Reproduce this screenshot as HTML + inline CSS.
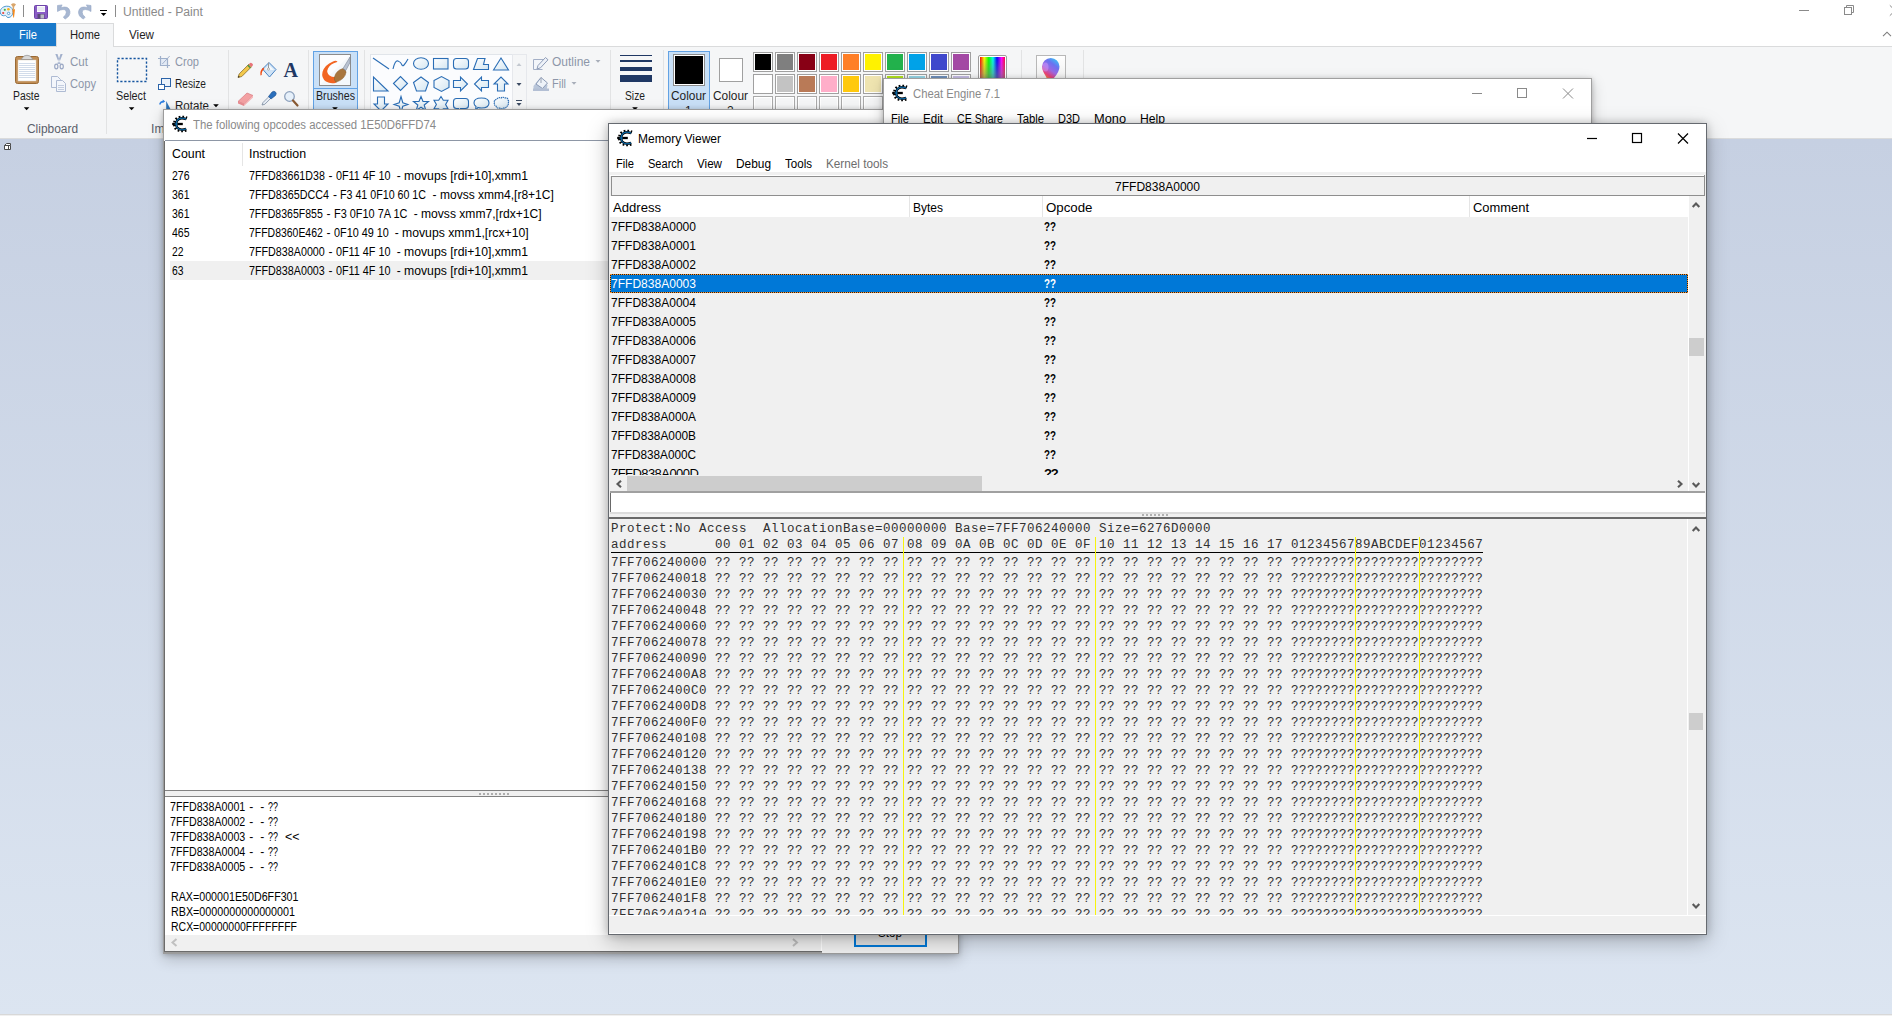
<!DOCTYPE html>
<html><head><meta charset="utf-8"><title>Untitled - Paint</title>
<style>
html,body{margin:0;padding:0}
body{width:1892px;height:1016px;overflow:hidden;position:relative;background:#fff;font-family:"Liberation Sans",sans-serif;font-size:12px}
.t{position:absolute;white-space:pre;line-height:normal}
.r{position:absolute}
.m{position:absolute;white-space:pre;font-family:"Liberation Mono",monospace;font-size:12.5px;letter-spacing:0.5px;line-height:16px;color:#303030;margin:0}
svg{position:absolute;overflow:visible}
</style></head><body>
<div class="r" style="left:0px;top:139px;width:1892px;height:877px;background:linear-gradient(#c6d0e2,#dce5f1);"></div>
<div class="r" style="left:0px;top:1014px;width:1892px;height:2px;background:#f0f0f0;border-top:1px solid #d8d8d8;box-sizing:border-box;"></div>
<svg style="left:3px;top:142px" width="10" height="10" viewBox="3 142 10 10"><path d="M4.500 145.500h6v4h-6zM4.500 145.500l2-2h4v2M8.500 145.500v4" fill="#fff" stroke="#4a4a4a" stroke-width="1"/></svg>
<div class="r" style="left:0px;top:0px;width:1892px;height:23px;background:#fff;"></div>
<div class="r" style="left:0px;top:23px;width:1892px;height:24px;background:#fff;border-bottom:1px solid #dadbdc;box-sizing:border-box;"></div>
<div class="r" style="left:0px;top:47px;width:1892px;height:92px;background:#f5f6f7;border-bottom:1px solid #dadbdc;box-sizing:border-box;"></div>
<div class="r" style="left:0px;top:23px;width:56px;height:23px;background:#1979ca;"></div>
<span class="t" style="left:19.00px;top:28.14px;font-size:12px;color:#fff;transform:scaleX(0.9310);transform-origin:0 0;">File</span>
<div class="r" style="left:56px;top:23px;width:58px;height:24px;background:#f5f6f7;border:1px solid #dadbdc;border-bottom:none;box-sizing:border-box;"></div>
<span class="t" style="left:70.00px;top:28.14px;font-size:12px;color:#1e1e1e;transform:scaleX(0.9372);transform-origin:0 0;">Home</span>
<span class="t" style="left:129.00px;top:28.14px;font-size:12px;color:#1e1e1e;transform:scaleX(0.9693);transform-origin:0 0;">View</span>
<span class="t" style="left:123.00px;top:5.14px;font-size:12px;color:#8a8a8a;transform:scaleX(1.0165);transform-origin:0 0;">Untitled - Paint</span>
<span class="t" style="left:13.00px;top:89.14px;font-size:12px;color:#1e1e1e;transform:scaleX(0.8636);transform-origin:0 0;">Paste</span>
<span class="t" style="left:70.00px;top:55.14px;font-size:12px;color:#8d96a9;transform:scaleX(0.9639);transform-origin:0 0;">Cut</span>
<span class="t" style="left:70.00px;top:77.14px;font-size:12px;color:#8d96a9;transform:scaleX(0.9282);transform-origin:0 0;">Copy</span>
<span class="t" style="left:27.00px;top:122.14px;font-size:12px;color:#5a5f6b;transform:scaleX(0.9930);transform-origin:0 0;">Clipboard</span>
<span class="t" style="left:151.00px;top:122.14px;font-size:12px;color:#5a5f6b;transform:scaleX(1.0194);transform-origin:0 0;">Image</span>
<span class="t" style="left:116.00px;top:89.14px;font-size:12px;color:#1e1e1e;transform:scaleX(0.8995);transform-origin:0 0;">Select</span>
<span class="t" style="left:175.00px;top:55.14px;font-size:12px;color:#8d96a9;transform:scaleX(0.9227);transform-origin:0 0;">Crop</span>
<span class="t" style="left:175.00px;top:77.14px;font-size:12px;color:#1e1e1e;transform:scaleX(0.8452);transform-origin:0 0;">Resize</span>
<span class="t" style="left:175.00px;top:99.14px;font-size:12px;color:#1e1e1e;transform:scaleX(0.9617);transform-origin:0 0;">Rotate</span>
<span class="t" style="left:552.00px;top:55.14px;font-size:12px;color:#8d96a9;transform:scaleX(0.9995);transform-origin:0 0;">Outline</span>
<span class="t" style="left:552.00px;top:77.14px;font-size:12px;color:#8d96a9;transform:scaleX(0.9134);transform-origin:0 0;">Fill</span>
<span class="t" style="left:625.00px;top:89.14px;font-size:12px;color:#1e1e1e;transform:scaleX(0.8568);transform-origin:0 0;">Size</span>
<div class="r" style="left:106px;top:50px;width:1px;height:84px;background:#e2e3e4;"></div>
<div class="r" style="left:228px;top:50px;width:1px;height:84px;background:#e2e3e4;"></div>
<div class="r" style="left:308px;top:50px;width:1px;height:84px;background:#e2e3e4;"></div>
<div class="r" style="left:364px;top:50px;width:1px;height:84px;background:#e2e3e4;"></div>
<div class="r" style="left:610px;top:50px;width:1px;height:84px;background:#e2e3e4;"></div>
<div class="r" style="left:663px;top:50px;width:1px;height:84px;background:#e2e3e4;"></div>
<div class="r" style="left:1021px;top:50px;width:1px;height:84px;background:#e2e3e4;"></div>
<div class="r" style="left:1083px;top:50px;width:1px;height:84px;background:#e2e3e4;"></div>
<svg style="left:0;top:0" width="120" height="23" viewBox="0 0 120 23">
<path d="M6.5 6.2C2.5 6.5 -0.5 9.5 0.3 13c0.5 2.2 2.6 3.2 4.4 2.6c1-.3 1.6.2 1.9 1c.5 1.2 2.2 1.2 3.6.4c2.200-1.300 3.100-3.800 2.700-6.300C12.400 7.600 9.800 6 6.500 6.200z" fill="#e4f0fa" stroke="#4f9ad0" stroke-width="1"/>
<circle cx="3.200" cy="13" r="1.100" fill="#e8413a"/><circle cx="4.800" cy="9.800" r="1.100" fill="#3db54a"/><circle cx="8.400" cy="9.300" r="1.300" fill="#f6b21b"/><circle cx="8.600" cy="13.400" r="1.200" fill="#fff" stroke="#3a8bc8" stroke-width=".8"/>
<path d="M12.300 9.300l2.700 0l-.9 7.600q-.5 1.600-.9 0z" fill="#f58a1f"/>
<path d="M11 4.400q2.500-2.400 5 0l-1.800 2.400l-.2 2.600l-1.200 0l-.2-2.600z" fill="#d9a66c"/>
<path d="M23.500 5v12M115.500 5v12" stroke="#8c8c8c" stroke-width="1"/>
<rect x="34.500" y="5.500" width="13" height="13" rx="1" fill="#8a5cc6" stroke="#6d44a8" stroke-width="1"/>
<rect x="37" y="6" width="8" height="6" fill="#fbfbfd"/><path d="M37.500 8h7M37.500 10h7" stroke="#c9c9dd" stroke-width=".7"/>
<rect x="37.500" y="14" width="7" height="4.500" fill="#5a4a78"/><rect x="40.500" y="14.500" width="3.500" height="4" fill="#b9b9c4"/>
<path d="M57.500 5.500l0 6l2.800-1.400q5.800-1.800 6 2.200q.2 2.600-3 4.800l1.800 2q5.600-3.200 4.800-7.800q-1.200-6-9.200-3.600l1.400-2.800z" fill="#a7b7d1" stroke="#93a6c6" stroke-width=".6"/>
<path d="M91 5.500l0 6l-2.800-1.400q-5.800-1.800-6 2.200q-.2 2.600 3 4.800l-1.800 2q-5.600-3.200-4.800-7.800q1.200-6 9.200-3.600l-1.400-2.800z" fill="#a7b7d1" stroke="#93a6c6" stroke-width=".6"/>
<path d="M100 10.500h7" stroke="#000" stroke-width="1"/><path d="M100.800 13h5.600l-2.800 3z" fill="#000"/>
</svg>
<svg style="left:1790px;top:0" width="102" height="46" viewBox="0 0 102 46">
<path d="M9 10.500h10" stroke="#8a8a8a" stroke-width="1"/>
<rect x="54.500" y="7.500" width="7" height="7" fill="#fff" stroke="#8a8a8a"/><path d="M56.500 7.500v-2h7v7h-2" fill="none" stroke="#8a8a8a"/>
<path d="M99.800 5.300l5 5M99.800 15.700l5-5" stroke="#8a8a8a" fill="none"/>
<path d="M93 36.200l4-4l4 4" fill="none" stroke="#7c7c7c" stroke-width="1.100"/>
</svg>
<svg style="left:0;top:46px" width="230" height="92" viewBox="0 46 230 92">
<!-- paste -->
<rect x="15.500" y="56.500" width="23" height="27" rx="2" fill="#c08d54" stroke="#9a6a35"/>
<rect x="18" y="60" width="18" height="21" fill="#fff" stroke="#d9d2c4" stroke-width=".5"/>
<path d="M19 63.500h16M19 65.500h16M19 67.500h16M19 69.500h16M19 71.500h16M19 73.500h16M19 75.500h16M19 77.500h16" stroke="#c7d3e4" stroke-width=".8"/>
<path d="M21 59.500l3-3.500q3-1.500 6 0l3 3.500z" fill="#d8d8d8" stroke="#8f8f8f" stroke-width=".7"/>
<path d="M23.800 107.200h5.600l-2.800 3z" fill="#000"/>
<!-- cut -->
<path d="M55.300 54l2.200 0l3.200 10l-1.400 0zM62.700 54l-2.200 0l-3.200 10l1.400 0z" fill="#a3b1cc"/>
<ellipse cx="56.300" cy="66.500" rx="1.600" ry="2.300" fill="none" stroke="#9aa7c4" stroke-width="1.200"/><ellipse cx="61.700" cy="66.500" rx="1.600" ry="2.300" fill="none" stroke="#9aa7c4" stroke-width="1.200"/>
<!-- copy -->
<path d="M51.500 76.500h6l3 3v8h-9z" fill="#f3f6fb" stroke="#aebbd3"/>
<path d="M56.500 80.500h6l3 3v8h-9z" fill="#f3f6fb" stroke="#aebbd3"/>
<path d="M58 85.500h6M58 87.500h6M58 89.500h6" stroke="#b8c4d9" stroke-width=".8"/>
<!-- select -->
<rect x="117.500" y="58.500" width="29" height="23" fill="none" stroke="#14549f" stroke-width="1.400" stroke-dasharray="2.200 1.800"/>
<path d="M128.800 107.200h5.600l-2.800 3z" fill="#000"/>
<!-- crop -->
<rect x="161" y="59" width="6" height="6" fill="#e3eaf5"/><path d="M160.500 56v9.500h9.500M158 58.500h9.500v9.500" fill="none" stroke="#9fb0cb" stroke-width="1.200"/><path d="M162.300 64l7.400-8" stroke="#a3b2cc" stroke-width="1"/>
<!-- resize -->
<rect x="161.500" y="78.500" width="9" height="8" fill="#eaf2fb" stroke="#2b63a8"/><rect x="158.500" y="84.500" width="6" height="5" fill="#fff" stroke="#2b63a8"/>
<!-- rotate -->
<path d="M166.200 101v9.500h5z" fill="#2b72b8"/><path d="M159.700 104.500q.8-3 3.800-3" fill="none" stroke="#2f7fe0" stroke-width="1.300"/><path d="M162.800 99.600l2.400 1.900l-2.600 1.500z" fill="#2f7fe0"/>
<path d="M213.200 104.200h5.600l-2.800 3z" fill="#000"/>
</svg>
<div class="r" style="left:313px;top:51px;width:45px;height:70px;background:#c9e0f7;border:1px solid #62a2e4;box-sizing:border-box"></div>
<div class="r" style="left:314px;top:88px;width:43px;height:1px;background:#62a2e4;"></div>
<svg style="left:230px;top:46px" width="135" height="70" viewBox="230 46 135 70">
<!-- pencil -->
<path d="M238 77.500l1.200-3.600l9.600-9.600l2.600 2.600l-9.600 9.600z" fill="#f2c84b" stroke="#8a6d2b" stroke-width=".8"/>
<path d="M248.800 64.300l1.300-1.300q1-.6 1.800.2l.8.800q.6.900-.1 1.700l-1.300 1.300z" fill="#e8747a"/>
<path d="M247.800 65.300l2.600 2.600" stroke="#3f8f4a" stroke-width="1.300"/>
<path d="M238 77.500l.6-1.800l1.200 1.200z" fill="#222"/>
<!-- bucket -->
<path d="M262.500 69l6.500-6.500l7 7l-6.500 7.500z" fill="#cfe3f6" stroke="#4a84c4" stroke-width="1"/>
<path d="M264.500 69.500l4.500-4.500l5 5z" fill="#fff" opacity=".8"/>
<path d="M260.500 75.500q-1-5 2.800-8l1 1.500q-3 2.500-2.600 6z" fill="#f04a12"/>
<path d="M268.500 69v-6.500" stroke="#9a9a9a" stroke-width="1"/><circle cx="268.500" cy="69" r="1.100" fill="#fff" stroke="#8a8a8a" stroke-width=".6"/>
<!-- eraser -->
<path d="M238 101.500l9-8.500l6 2.500l-9 8.500z" fill="#f3a1a3" stroke="#d77a80" stroke-width=".7"/>
<path d="M238 101.500l6 2.500l0 2l-6-2.500z" fill="#e98b90"/><path d="M244 104l9-8.500v2l-9 8.500z" fill="#f6b4b6"/>
<!-- picker -->
<path d="M262 105l1-2.500l7-7l1.800 1.800l-7 7z" fill="#e8eef6" stroke="#7a8aa0" stroke-width=".8"/>
<path d="M268.500 96.500l3.500-4.500q2-1.500 3.500 0t0 3.500l-4.500 3.500z" fill="#2a6fbc" stroke="#1d4f8c" stroke-width=".6"/>
<!-- magnifier -->
<circle cx="289.500" cy="96.500" r="4.800" fill="#e6f0fa" stroke="#8ea2bd" stroke-width="1.300"/>
<path d="M293 100.500l4.500 5" stroke="#8a5a33" stroke-width="2.200" stroke-linecap="round"/>
<!-- brushes pic -->
<rect x="319.500" y="54.500" width="31" height="31" fill="#f4f8fb" stroke="#8c8c8c"/>
<path d="M320 55h30l-30 30z" fill="#fff" opacity=".7"/>
<path d="M337.500 61.800q-1.500-1.800-4.500-.3q-8.500 3.500-10.500 10.500q-1.500 6 3.500 9.500q4.500 2.800 10 1.300l2-6.500q-4.500 1.800-8.500-.8q-3.500-2.800-1.500-7q2.500-4.800 8.500-6.200z" fill="#f26522"/>
<path d="M334.500 77q1.500-6.500 8.500-8.500q3 .8 3 3.800q-.8 6.800-10 10q-2.200-1.800-1.500-5.300z" fill="#a8763e" stroke="#8a5c2b" stroke-width=".5"/>
<path d="M343 68.500l7-11.500l0 5.500l-4.200 8z" fill="#b9c3d2" stroke="#7c8797" stroke-width=".6"/>
<path d="M332.200 107.200h5.600l-2.800 3z" fill="#000"/>
</svg>
<span class="t" style="left:283.50px;top:58.90px;font-size:20px;color:#1f3864;font-weight:bold;font-family:'Liberation Serif',serif;">A</span>
<span class="t" style="left:316.00px;top:89.14px;font-size:12px;color:#1e1e1e;transform:scaleX(0.8859);transform-origin:0 0;">Brushes</span>
<div class="r" style="left:370px;top:54px;width:143px;height:67px;background:#fbfcfe;border:1px solid #e1e5ea;box-sizing:border-box;"></div>
<div class="r" style="left:512px;top:54px;width:15px;height:67px;background:#f5f6f7;border:1px solid #e6e8ec;box-sizing:border-box;"></div>
<svg style="left:370px;top:54px" width="160" height="67" viewBox="370 54 160 67"><defs><linearGradient id="sg" x1="0" y1="0" x2="1" y2="1"><stop offset="0" stop-color="#ffffff"/><stop offset="1" stop-color="#d4e6f1"/></linearGradient></defs><path d="M373 58l16 11" fill="none" stroke="#2a6db5" stroke-width="1.1"/><path d="M393 69q2-9 5-8t4 4t6-6" fill="none" stroke="#2a6db5" stroke-width="1.1"/><ellipse cx="421" cy="63.5" rx="7.500" ry="5.800" fill="url(#sg)" stroke="#2a6db5" stroke-width="1.1" stroke-linejoin="miter"/><rect x="433.500" y="58.500" width="14.500" height="10.500" fill="url(#sg)" stroke="#2a6db5" stroke-width="1.1" stroke-linejoin="miter"/><rect x="453.500" y="58.500" width="15" height="10.500" rx="3" fill="url(#sg)" stroke="#2a6db5" stroke-width="1.1" stroke-linejoin="miter"/><path d="M473.500 69.500l4-11h7.500l-1.500 6h5v5z" fill="url(#sg)" stroke="#2a6db5" stroke-width="1.1" stroke-linejoin="miter"/><path d="M493.500 70l7.500-12l7.500 12z" fill="url(#sg)" stroke="#2a6db5" stroke-width="1.1" stroke-linejoin="miter"/><path d="M373.500 77v14h14.500z" fill="url(#sg)" stroke="#2a6db5" stroke-width="1.1" stroke-linejoin="miter"/><path d="M393.500 83.500l7-7l7 7l-7 7z" fill="url(#sg)" stroke="#2a6db5" stroke-width="1.1" stroke-linejoin="miter"/><path d="M413.500 82.500l7.500-5.500l7.500 5.500l-3 8.500h-9z" fill="url(#sg)" stroke="#2a6db5" stroke-width="1.1" stroke-linejoin="miter"/><path d="M434 80.500l7.500-4l7.500 4v7l-7.500 4l-7.500-4z" fill="url(#sg)" stroke="#2a6db5" stroke-width="1.1" stroke-linejoin="miter"/><path d="M453.500 80.500h7v-3.500l7 7l-7 7v-3.500h-7z" fill="url(#sg)" stroke="#2a6db5" stroke-width="1.1" stroke-linejoin="miter"/><path d="M488.500 80.500h-7v-3.500l-7 7l7 7v-3.500h7z" fill="url(#sg)" stroke="#2a6db5" stroke-width="1.1" stroke-linejoin="miter"/><path d="M497.500 91v-7h-3.500l7-7l7 7h-3.500v7z" fill="url(#sg)" stroke="#2a6db5" stroke-width="1.1" stroke-linejoin="miter"/><path d="M377.500 97v7h-3.500l7 7l7-7h-3.500v-7z" fill="url(#sg)" stroke="#2a6db5" stroke-width="1.1" stroke-linejoin="miter"/><path d="M401 96.500l1.800 6.200l5.200 1.800l-5.200 1.800l-1.800 6.200l-1.800-6.200l-5.200-1.800l5.200-1.800z" fill="url(#sg)" stroke="#2a6db5" stroke-width="1.1" stroke-linejoin="miter"/><path d="M421 96.500l2 5h5.500l-4.300 3.500l1.600 5.500l-4.800-3.300l-4.800 3.300l1.600-5.500l-4.300-3.500h5.500z" fill="url(#sg)" stroke="#2a6db5" stroke-width="1.1" stroke-linejoin="miter"/><path d="M441 96.500l2.300 3.800h4.700l-2.400 4.200l2.400 4.200h-4.700l-2.300 3.800l-2.300-3.800h-4.700l2.400-4.200l-2.400-4.200h4.700z" fill="url(#sg)" stroke="#2a6db5" stroke-width="1.1" stroke-linejoin="miter"/><path d="M456.500 98.500h9q3 0 3 3v4q0 3-3 3h-5l-2 3v-3h-2q-3 0-3-3v-4q0-3 3-3z" fill="url(#sg)" stroke="#2a6db5" stroke-width="1.1" stroke-linejoin="miter"/><path d="M481.500 98q7.500 0 7.500 5t-7.500 5q-2 0-3.500-.5l-2.500 3l.5-4q-2-1.500-2-3.500q0-5 7.500-5z" fill="url(#sg)" stroke="#2a6db5" stroke-width="1.1" stroke-linejoin="miter"/><path d="M497 99q1.500-2 4-1q2-1.500 4 0q3-.5 3 2q1.500 1.500 0 3q1 2.500-1.500 3.500q-.5 2-3 1.500q-2 1.500-4 0q-3 .5-3.500-2q-2.500-1-1.500-3.500q-1-2 2.500-3.500z" fill="url(#sg)" stroke="#2a6db5" stroke-width="1.1" stroke-linejoin="miter" stroke-dasharray="1.500 .6"/><path d="M516.500 66h5l-2.500-3z" fill="#c3c8d0"/><path d="M516.500 83h5l-2.500 3z" fill="#3c4b63"/><path d="M516 100.500h6" stroke="#3c4b63" stroke-width="1"/><path d="M516.500 103h5l-2.500 3z" fill="#3c4b63"/></svg>
<svg style="left:530px;top:54px" width="80" height="40" viewBox="530 54 80 40">
<path d="M544 59.500h-10.500v10h9" fill="#f3f6fa" stroke="#a3afc6" stroke-width="1"/>
<path d="M537 69l1-3.500l7.500-8l2.500 2.300l-7.500 8z" fill="#eef2f8" stroke="#8f9db8" stroke-width="1"/>
<path d="M595.500 60h5l-2.500 2.800z" fill="#a8aeb9"/>
<path d="M533.500 91v-5l6-7.500l8 6.500l-1 6z" fill="#b9c6da"/>
<path d="M536 84l5-6.500l6.500 5.500l-5 5.500z" fill="#eef3f9" stroke="#8c9bb6" stroke-width="1"/>
<path d="M541 83v-5.500" stroke="#9aa3b3" stroke-width="1"/>
<rect x="533" y="88.500" width="16" height="2.500" fill="#b3bfd4"/>
<path d="M571.500 82h5l-2.500 2.800z" fill="#a8aeb9"/>
</svg>
<div class="r" style="left:620px;top:55px;width:32px;height:1px;background:#1f3864;"></div>
<div class="r" style="left:620px;top:60px;width:32px;height:2px;background:#1f3864;"></div>
<div class="r" style="left:620px;top:67px;width:32px;height:4px;background:#1f3864;"></div>
<div class="r" style="left:620px;top:75px;width:32px;height:7px;background:#1f3864;"></div>
<svg style="left:630px;top:106px" width="10" height="5" viewBox="0 0 10 5"><path d="M2.200 1.200h5.600l-2.800 3z" fill="#000"/></svg>
<div class="r" style="left:668px;top:51px;width:42px;height:70px;background:#c9e0f7;border:1px solid #62a2e4;box-sizing:border-box;"></div>
<div class="r" style="left:673px;top:54px;width:32px;height:32px;background:#fff;border:1px solid #8c8c8c;box-sizing:border-box;"></div>
<div class="r" style="left:675px;top:56px;width:28px;height:28px;background:#000;"></div>
<div class="r" style="left:719px;top:58px;width:24px;height:24px;background:#fff;border:1px solid #a0a0a0;box-sizing:border-box;"></div>
<span class="t" style="left:671.00px;top:89.14px;font-size:12px;color:#1e1e1e;transform:scaleX(0.9901);transform-origin:0 0;">Colour</span>
<span class="t" style="left:685.00px;top:103.64px;font-size:12px;color:#1e1e1e;">1</span>
<span class="t" style="left:713.00px;top:89.14px;font-size:12px;color:#1e1e1e;transform:scaleX(0.9901);transform-origin:0 0;">Colour</span>
<span class="t" style="left:727.00px;top:103.64px;font-size:12px;color:#1e1e1e;">2</span>
<div class="r" style="left:753px;top:52px;width:20px;height:20px;background:#000000;border:1px solid #a0a0a0;box-shadow:inset 0 0 0 1px #fff;box-sizing:border-box;"></div>
<div class="r" style="left:775px;top:52px;width:20px;height:20px;background:#7f7f7f;border:1px solid #a0a0a0;box-shadow:inset 0 0 0 1px #fff;box-sizing:border-box;"></div>
<div class="r" style="left:797px;top:52px;width:20px;height:20px;background:#880015;border:1px solid #a0a0a0;box-shadow:inset 0 0 0 1px #fff;box-sizing:border-box;"></div>
<div class="r" style="left:819px;top:52px;width:20px;height:20px;background:#ed1c24;border:1px solid #a0a0a0;box-shadow:inset 0 0 0 1px #fff;box-sizing:border-box;"></div>
<div class="r" style="left:841px;top:52px;width:20px;height:20px;background:#ff7f27;border:1px solid #a0a0a0;box-shadow:inset 0 0 0 1px #fff;box-sizing:border-box;"></div>
<div class="r" style="left:863px;top:52px;width:20px;height:20px;background:#fff200;border:1px solid #a0a0a0;box-shadow:inset 0 0 0 1px #fff;box-sizing:border-box;"></div>
<div class="r" style="left:885px;top:52px;width:20px;height:20px;background:#22b14c;border:1px solid #a0a0a0;box-shadow:inset 0 0 0 1px #fff;box-sizing:border-box;"></div>
<div class="r" style="left:907px;top:52px;width:20px;height:20px;background:#00a2e8;border:1px solid #a0a0a0;box-shadow:inset 0 0 0 1px #fff;box-sizing:border-box;"></div>
<div class="r" style="left:929px;top:52px;width:20px;height:20px;background:#3f48cc;border:1px solid #a0a0a0;box-shadow:inset 0 0 0 1px #fff;box-sizing:border-box;"></div>
<div class="r" style="left:951px;top:52px;width:20px;height:20px;background:#a349a4;border:1px solid #a0a0a0;box-shadow:inset 0 0 0 1px #fff;box-sizing:border-box;"></div>
<div class="r" style="left:753px;top:74px;width:20px;height:20px;background:#ffffff;border:1px solid #a0a0a0;box-shadow:inset 0 0 0 1px #fff;box-sizing:border-box;"></div>
<div class="r" style="left:775px;top:74px;width:20px;height:20px;background:#c3c3c3;border:1px solid #a0a0a0;box-shadow:inset 0 0 0 1px #fff;box-sizing:border-box;"></div>
<div class="r" style="left:797px;top:74px;width:20px;height:20px;background:#b97a57;border:1px solid #a0a0a0;box-shadow:inset 0 0 0 1px #fff;box-sizing:border-box;"></div>
<div class="r" style="left:819px;top:74px;width:20px;height:20px;background:#ffaec9;border:1px solid #a0a0a0;box-shadow:inset 0 0 0 1px #fff;box-sizing:border-box;"></div>
<div class="r" style="left:841px;top:74px;width:20px;height:20px;background:#ffc90e;border:1px solid #a0a0a0;box-shadow:inset 0 0 0 1px #fff;box-sizing:border-box;"></div>
<div class="r" style="left:863px;top:74px;width:20px;height:20px;background:#efe4b0;border:1px solid #a0a0a0;box-shadow:inset 0 0 0 1px #fff;box-sizing:border-box;"></div>
<div class="r" style="left:885px;top:74px;width:20px;height:20px;background:#b5e61d;border:1px solid #a0a0a0;box-shadow:inset 0 0 0 1px #fff;box-sizing:border-box;"></div>
<div class="r" style="left:907px;top:74px;width:20px;height:20px;background:#99d9ea;border:1px solid #a0a0a0;box-shadow:inset 0 0 0 1px #fff;box-sizing:border-box;"></div>
<div class="r" style="left:929px;top:74px;width:20px;height:20px;background:#7092be;border:1px solid #a0a0a0;box-shadow:inset 0 0 0 1px #fff;box-sizing:border-box;"></div>
<div class="r" style="left:951px;top:74px;width:20px;height:20px;background:#c8bfe7;border:1px solid #a0a0a0;box-shadow:inset 0 0 0 1px #fff;box-sizing:border-box;"></div>
<div class="r" style="left:753px;top:96px;width:20px;height:20px;background:#f5f6f7;border:1px solid #a9a9a9;box-shadow:inset 0 0 0 1px #fff;box-sizing:border-box;"></div>
<div class="r" style="left:775px;top:96px;width:20px;height:20px;background:#f5f6f7;border:1px solid #a9a9a9;box-shadow:inset 0 0 0 1px #fff;box-sizing:border-box;"></div>
<div class="r" style="left:797px;top:96px;width:20px;height:20px;background:#f5f6f7;border:1px solid #a9a9a9;box-shadow:inset 0 0 0 1px #fff;box-sizing:border-box;"></div>
<div class="r" style="left:819px;top:96px;width:20px;height:20px;background:#f5f6f7;border:1px solid #a9a9a9;box-shadow:inset 0 0 0 1px #fff;box-sizing:border-box;"></div>
<div class="r" style="left:841px;top:96px;width:20px;height:20px;background:#f5f6f7;border:1px solid #a9a9a9;box-shadow:inset 0 0 0 1px #fff;box-sizing:border-box;"></div>
<div class="r" style="left:863px;top:96px;width:20px;height:20px;background:#f5f6f7;border:1px solid #a9a9a9;box-shadow:inset 0 0 0 1px #fff;box-sizing:border-box;"></div>
<div class="r" style="left:885px;top:96px;width:20px;height:20px;background:#f5f6f7;border:1px solid #a9a9a9;box-shadow:inset 0 0 0 1px #fff;box-sizing:border-box;"></div>
<div class="r" style="left:907px;top:96px;width:20px;height:20px;background:#f5f6f7;border:1px solid #a9a9a9;box-shadow:inset 0 0 0 1px #fff;box-sizing:border-box;"></div>
<div class="r" style="left:929px;top:96px;width:20px;height:20px;background:#f5f6f7;border:1px solid #a9a9a9;box-shadow:inset 0 0 0 1px #fff;box-sizing:border-box;"></div>
<div class="r" style="left:951px;top:96px;width:20px;height:20px;background:#f5f6f7;border:1px solid #a9a9a9;box-shadow:inset 0 0 0 1px #fff;box-sizing:border-box;"></div>
<div class="r" style="left:978px;top:55px;width:29px;height:30px;background:#fff;border:1px solid #9c9c9c;border-radius:2px;box-sizing:border-box;"></div>
<div class="r" style="left:980px;top:57px;width:25px;height:26px;background:linear-gradient(180deg,rgba(128,128,128,0) 0%,rgba(128,128,128,.8)),linear-gradient(90deg,#ff0000,#ffff00 17%,#00ff00 35%,#00ffee 52%,#0000ff 68%,#ff00ff 86%,#ff0040);"></div>
<div class="r" style="left:1036px;top:55px;width:30px;height:30px;background:linear-gradient(#fff,#ececec);border:1px solid #b8b8b8;box-sizing:border-box;"></div>
<svg style="left:1038px;top:56px" width="26" height="28" viewBox="1038 56 26 28"><defs><linearGradient id="p3" x1=".85" y1="0" x2=".3" y2="1"><stop offset="0" stop-color="#2fd0f7"/><stop offset=".3" stop-color="#6a72f0"/><stop offset=".55" stop-color="#9a68e4"/><stop offset=".78" stop-color="#e8417a"/><stop offset="1" stop-color="#f9a51c"/></linearGradient></defs>
<path d="M1050.800 57.900a8.700 8.700 0 0 1 8.700 8.700q0 5-5.500 11.500q-3 3.500-5.200 3q-1.500-1-3.200-5q-3.500-5.500-3.500-9.500a8.700 8.700 0 0 1 8.700-8.700z" fill="url(#p3)"/><ellipse cx="1045.500" cy="67" rx="3" ry="4.500" fill="#d9a0ff" opacity=".45"/></svg>
<div class="r" style="left:163px;top:109px;width:796px;height:845px;background:#fff;border:1px solid #9c9c9c;box-sizing:border-box;box-shadow:0 1px 5px rgba(0,0,0,.22),0 5px 14px rgba(0,0,0,.20);"></div>
<div class="r" style="left:164px;top:141px;width:1px;height:811px;background:#6b6b6b;"></div>
<svg style="left:172px;top:116px" width="16" height="16" viewBox="0 0 16 16"><path d="M14.2 3.1 C 10.5 1.7, 6.8 2.3, 5.2 4.4 C 3.9 6.2, 3.9 9.8, 5.2 11.6 C 6.8 13.7, 10.5 14.3, 14.2 12.9" transform="translate(11 8) scale(1.24 1.2) translate(-11 -8)" fill="none" stroke="#000" stroke-width="2.6" stroke-dasharray="1.3 1.5" stroke-dashoffset="0.3"/><path d="M14.2 3.1 C 10.5 1.7, 6.8 2.3, 5.2 4.4 C 3.9 6.2, 3.9 9.8, 5.2 11.6 C 6.8 13.7, 10.5 14.3, 14.2 12.9" fill="none" stroke="#000" stroke-width="2.5"/><path d="M0.2 8h10.6" stroke="#000" stroke-width="2.3"/><path d="M14.2 3.1 C 10.5 1.7, 6.8 2.3, 5.2 4.4 C 3.9 6.2, 3.9 9.8, 5.2 11.6 C 6.8 13.7, 10.5 14.3, 14.2 12.9" fill="none" stroke="#0b66a3" stroke-width="1.3"/><path d="M2.5 8h3.500" stroke="#0b66a3" stroke-width="1"/></svg>
<span class="t" style="left:193.00px;top:118.14px;font-size:12px;color:#8a8a8a;transform:scaleX(0.9463);transform-origin:0 0;">The following opcodes accessed 1E50D6FFD74</span>
<div class="r" style="left:165px;top:140px;width:793px;height:1px;background:#8e97a6;"></div>
<span class="t" style="left:172.00px;top:147.14px;font-size:12px;color:#000;transform:scaleX(1.0306);transform-origin:0 0;">Count</span>
<span class="t" style="left:249.00px;top:147.14px;font-size:12px;color:#000;transform:scaleX(1.0296);transform-origin:0 0;">Instruction</span>
<div class="r" style="left:242px;top:143px;width:1px;height:23px;background:#e5e5e5;"></div>
<div class="r" style="left:170px;top:261px;width:438px;height:19px;background:#f0f0f0;"></div>
<span class="t" style="left:172.00px;top:169.14px;font-size:12px;color:#000;transform:scaleX(0.8741);transform-origin:0 0;">276</span>
<span class="t" style="left:249.20px;top:169.14px;font-size:12px;color:#000;transform:scaleX(0.8878);transform-origin:0 0;">7FFD83661D38</span>
<span class="t" style="left:328.60px;top:169.14px;font-size:12px;color:#000;">-</span>
<span class="t" style="left:335.80px;top:169.14px;font-size:12px;color:#000;transform:scaleX(0.9012);transform-origin:0 0;">0F11 4F 10</span>
<span class="t" style="left:396.80px;top:169.14px;font-size:12px;color:#000;">-</span>
<span class="t" style="left:404.30px;top:169.14px;font-size:12px;color:#000;transform:scaleX(1.0188);transform-origin:0 0;">movups [rdi+10],xmm1</span>
<span class="t" style="left:172.00px;top:188.14px;font-size:12px;color:#000;transform:scaleX(0.8741);transform-origin:0 0;">361</span>
<span class="t" style="left:249.20px;top:188.14px;font-size:12px;color:#000;transform:scaleX(0.8952);transform-origin:0 0;">7FFD8365DCC4</span>
<span class="t" style="left:332.90px;top:188.14px;font-size:12px;color:#000;">-</span>
<span class="t" style="left:340.10px;top:188.14px;font-size:12px;color:#000;transform:scaleX(0.8891);transform-origin:0 0;">F3 41 0F10 60 1C</span>
<span class="t" style="left:432.60px;top:188.14px;font-size:12px;color:#000;">-</span>
<span class="t" style="left:440.40px;top:188.14px;font-size:12px;color:#000;transform:scaleX(1.0009);transform-origin:0 0;">movss xmm4,[r8+1C]</span>
<span class="t" style="left:172.00px;top:207.14px;font-size:12px;color:#000;transform:scaleX(0.8741);transform-origin:0 0;">361</span>
<span class="t" style="left:249.20px;top:207.14px;font-size:12px;color:#000;transform:scaleX(0.8781);transform-origin:0 0;">7FFD8365F855</span>
<span class="t" style="left:326.50px;top:207.14px;font-size:12px;color:#000;">-</span>
<span class="t" style="left:333.60px;top:207.14px;font-size:12px;color:#000;transform:scaleX(0.9094);transform-origin:0 0;">F3 0F10 7A 1C</span>
<span class="t" style="left:413.70px;top:207.14px;font-size:12px;color:#000;">-</span>
<span class="t" style="left:421.20px;top:207.14px;font-size:12px;color:#000;transform:scaleX(1.0076);transform-origin:0 0;">movss xmm7,[rdx+1C]</span>
<span class="t" style="left:172.00px;top:226.14px;font-size:12px;color:#000;transform:scaleX(0.8741);transform-origin:0 0;">465</span>
<span class="t" style="left:249.20px;top:226.14px;font-size:12px;color:#000;transform:scaleX(0.8711);transform-origin:0 0;">7FFD8360E462</span>
<span class="t" style="left:326.50px;top:226.14px;font-size:12px;color:#000;">-</span>
<span class="t" style="left:333.60px;top:226.14px;font-size:12px;color:#000;transform:scaleX(0.9026);transform-origin:0 0;">0F10 49 10</span>
<span class="t" style="left:394.80px;top:226.14px;font-size:12px;color:#000;">-</span>
<span class="t" style="left:402.10px;top:226.14px;font-size:12px;color:#000;transform:scaleX(1.0187);transform-origin:0 0;">movups xmm1,[rcx+10]</span>
<span class="t" style="left:172.00px;top:245.14px;font-size:12px;color:#000;transform:scaleX(0.8616);transform-origin:0 0;">22</span>
<span class="t" style="left:249.20px;top:245.14px;font-size:12px;color:#000;transform:scaleX(0.8947);transform-origin:0 0;">7FFD838A0000</span>
<span class="t" style="left:328.60px;top:245.14px;font-size:12px;color:#000;">-</span>
<span class="t" style="left:335.80px;top:245.14px;font-size:12px;color:#000;transform:scaleX(0.9012);transform-origin:0 0;">0F11 4F 10</span>
<span class="t" style="left:396.80px;top:245.14px;font-size:12px;color:#000;">-</span>
<span class="t" style="left:404.30px;top:245.14px;font-size:12px;color:#000;transform:scaleX(1.0188);transform-origin:0 0;">movups [rdi+10],xmm1</span>
<span class="t" style="left:172.00px;top:264.14px;font-size:12px;color:#000;transform:scaleX(0.8616);transform-origin:0 0;">63</span>
<span class="t" style="left:249.20px;top:264.14px;font-size:12px;color:#000;transform:scaleX(0.8947);transform-origin:0 0;">7FFD838A0003</span>
<span class="t" style="left:328.60px;top:264.14px;font-size:12px;color:#000;">-</span>
<span class="t" style="left:335.80px;top:264.14px;font-size:12px;color:#000;transform:scaleX(0.9012);transform-origin:0 0;">0F11 4F 10</span>
<span class="t" style="left:396.80px;top:264.14px;font-size:12px;color:#000;">-</span>
<span class="t" style="left:404.30px;top:264.14px;font-size:12px;color:#000;transform:scaleX(1.0188);transform-origin:0 0;">movups [rdi+10],xmm1</span>
<div class="r" style="left:165px;top:790px;width:793px;height:7px;background:#f0f0f0;border-top:1px solid #828282;border-bottom:1px solid #828282;box-sizing:border-box;"></div>
<div class="r" style="left:479px;top:793px;width:30px;height:2px;background:repeating-linear-gradient(90deg,#adadad 0 2px,transparent 2px 4px)"></div>
<span class="t" style="left:170.10px;top:800.14px;font-size:12px;color:#000;transform:scaleX(0.8888);transform-origin:0 0;">7FFD838A0001</span>
<span class="t" style="left:249.30px;top:800.14px;font-size:12px;color:#000;">-</span>
<span class="t" style="left:260.20px;top:800.14px;font-size:12px;color:#000;">-</span>
<span class="t" style="left:268.20px;top:800.14px;font-size:12px;color:#000;transform:scaleX(0.7492);transform-origin:0 0;">??</span>
<span class="t" style="left:170.10px;top:815.14px;font-size:12px;color:#000;transform:scaleX(0.8888);transform-origin:0 0;">7FFD838A0002</span>
<span class="t" style="left:249.30px;top:815.14px;font-size:12px;color:#000;">-</span>
<span class="t" style="left:260.20px;top:815.14px;font-size:12px;color:#000;">-</span>
<span class="t" style="left:268.20px;top:815.14px;font-size:12px;color:#000;transform:scaleX(0.7492);transform-origin:0 0;">??</span>
<span class="t" style="left:170.10px;top:830.14px;font-size:12px;color:#000;transform:scaleX(0.8888);transform-origin:0 0;">7FFD838A0003</span>
<span class="t" style="left:249.30px;top:830.14px;font-size:12px;color:#000;">-</span>
<span class="t" style="left:260.20px;top:830.14px;font-size:12px;color:#000;">-</span>
<span class="t" style="left:268.20px;top:830.14px;font-size:12px;color:#000;transform:scaleX(0.7492);transform-origin:0 0;">??</span>
<span class="t" style="left:284.50px;top:830.14px;font-size:12px;color:#000;transform:scaleX(1.0346);transform-origin:0 0;">&lt;&lt;</span>
<span class="t" style="left:170.10px;top:845.14px;font-size:12px;color:#000;transform:scaleX(0.8888);transform-origin:0 0;">7FFD838A0004</span>
<span class="t" style="left:249.30px;top:845.14px;font-size:12px;color:#000;">-</span>
<span class="t" style="left:260.20px;top:845.14px;font-size:12px;color:#000;">-</span>
<span class="t" style="left:268.20px;top:845.14px;font-size:12px;color:#000;transform:scaleX(0.7492);transform-origin:0 0;">??</span>
<span class="t" style="left:170.10px;top:860.14px;font-size:12px;color:#000;transform:scaleX(0.8888);transform-origin:0 0;">7FFD838A0005</span>
<span class="t" style="left:249.30px;top:860.14px;font-size:12px;color:#000;">-</span>
<span class="t" style="left:260.20px;top:860.14px;font-size:12px;color:#000;">-</span>
<span class="t" style="left:268.20px;top:860.14px;font-size:12px;color:#000;transform:scaleX(0.7492);transform-origin:0 0;">??</span>
<span class="t" style="left:170.60px;top:890.14px;font-size:12px;color:#000;transform:scaleX(0.8910);transform-origin:0 0;">RAX=000001E50D6FF301</span>
<span class="t" style="left:170.60px;top:905.14px;font-size:12px;color:#000;transform:scaleX(0.8956);transform-origin:0 0;">RBX=0000000000000001</span>
<span class="t" style="left:170.60px;top:920.14px;font-size:12px;color:#000;transform:scaleX(0.8728);transform-origin:0 0;">RCX=00000000FFFFFFFF</span>
<div class="r" style="left:165px;top:935px;width:656px;height:16px;background:#f0f0f0;"></div>
<div class="r" style="left:164px;top:951px;width:658px;height:1px;background:#6b6b6b;"></div>
<div class="r" style="left:164px;top:952px;width:658px;height:1px;background:#9a9a9a;"></div>
<div class="r" style="left:821px;top:797px;width:1px;height:154px;background:#fff;"></div>
<div class="r" style="left:822px;top:797px;width:136px;height:156px;background:#f0f0f0;"></div>
<svg style="left:170px;top:937px" width="10" height="12" viewBox="0 0 10 12"><path d="M6.5 2L2.5 5.5L6.5 9" fill="none" stroke="#c0c0c0" stroke-width="2"/></svg>
<svg style="left:790px;top:937px" width="10" height="12" viewBox="0 0 10 12"><path d="M3 2L7 5.5L3 9" fill="none" stroke="#c0c0c0" stroke-width="2"/></svg>
<div class="r" style="left:854px;top:922px;width:73px;height:25px;background:#e1e1e1;border:2px solid #0078d7;box-sizing:border-box;"></div>
<span class="t" style="left:878.00px;top:926.14px;font-size:12px;color:#000;transform:scaleX(0.9722);transform-origin:0 0;">Stop</span>
<div class="r" style="left:883px;top:78px;width:709px;height:400px;background:#fff;border:1px solid #a0a0a0;box-sizing:border-box;box-shadow:0 1px 5px rgba(0,0,0,.22),0 5px 14px rgba(0,0,0,.20);"></div>
<svg style="left:892px;top:85px" width="16" height="16" viewBox="0 0 16 16"><path d="M14.2 3.1 C 10.5 1.7, 6.8 2.3, 5.2 4.4 C 3.9 6.2, 3.9 9.8, 5.2 11.6 C 6.8 13.7, 10.5 14.3, 14.2 12.9" transform="translate(11 8) scale(1.24 1.2) translate(-11 -8)" fill="none" stroke="#000" stroke-width="2.6" stroke-dasharray="1.3 1.5" stroke-dashoffset="0.3"/><path d="M14.2 3.1 C 10.5 1.7, 6.8 2.3, 5.2 4.4 C 3.9 6.2, 3.9 9.8, 5.2 11.6 C 6.8 13.7, 10.5 14.3, 14.2 12.9" fill="none" stroke="#000" stroke-width="2.5"/><path d="M0.2 8h10.6" stroke="#000" stroke-width="2.3"/><path d="M14.2 3.1 C 10.5 1.7, 6.8 2.3, 5.2 4.4 C 3.9 6.2, 3.9 9.8, 5.2 11.6 C 6.8 13.7, 10.5 14.3, 14.2 12.9" fill="none" stroke="#0b66a3" stroke-width="1.3"/><path d="M2.5 8h3.500" stroke="#0b66a3" stroke-width="1"/></svg>
<span class="t" style="left:913.00px;top:87.14px;font-size:12px;color:#8a8a8a;transform:scaleX(0.9382);transform-origin:0 0;">Cheat Engine 7.1</span>
<svg style="left:1472px;top:88px" width="110" height="12" viewBox="0 0 110 12"><path d="M0 5.5h10" stroke="#8a8a8a" stroke-width="1"/><rect x="45.5" y="0.5" width="9" height="9" fill="none" stroke="#8a8a8a" stroke-width="1"/><path d="M91 0.5l10 10M101 0.5l-10 10" stroke="#8a8a8a" stroke-width="1" fill="none"/></svg>
<span class="t" style="left:891.00px;top:112.14px;font-size:12px;color:#000;transform:scaleX(0.9310);transform-origin:0 0;">File</span>
<span class="t" style="left:923.00px;top:112.14px;font-size:12px;color:#000;transform:scaleX(0.9672);transform-origin:0 0;">Edit</span>
<span class="t" style="left:957.00px;top:112.14px;font-size:12px;color:#000;transform:scaleX(0.8842);transform-origin:0 0;">CE Share</span>
<span class="t" style="left:1017.00px;top:112.14px;font-size:12px;color:#000;transform:scaleX(0.9412);transform-origin:0 0;">Table</span>
<span class="t" style="left:1058.00px;top:112.14px;font-size:12px;color:#000;transform:scaleX(0.9165);transform-origin:0 0;">D3D</span>
<span class="t" style="left:1094.00px;top:112.14px;font-size:12px;color:#000;transform:scaleX(1.0661);transform-origin:0 0;">Mono</span>
<span class="t" style="left:1140.00px;top:112.14px;font-size:12px;color:#000;transform:scaleX(1.0130);transform-origin:0 0;">Help</span>
<div class="r" style="left:608px;top:123px;width:1099px;height:812px;background:#f0f0f0;border:1px solid #666a70;box-sizing:border-box;box-shadow:0 0 8px rgba(0,0,0,.20),0 6px 20px rgba(0,0,0,.26);"></div>
<div class="r" style="left:609px;top:124px;width:1097px;height:48px;background:#fff;"></div>
<svg style="left:617px;top:130px" width="16" height="16" viewBox="0 0 16 16"><path d="M14.2 3.1 C 10.5 1.7, 6.8 2.3, 5.2 4.4 C 3.9 6.2, 3.9 9.8, 5.2 11.6 C 6.8 13.7, 10.5 14.3, 14.2 12.9" transform="translate(11 8) scale(1.24 1.2) translate(-11 -8)" fill="none" stroke="#000" stroke-width="2.6" stroke-dasharray="1.3 1.5" stroke-dashoffset="0.3"/><path d="M14.2 3.1 C 10.5 1.7, 6.8 2.3, 5.2 4.4 C 3.9 6.2, 3.9 9.8, 5.2 11.6 C 6.8 13.7, 10.5 14.3, 14.2 12.9" fill="none" stroke="#000" stroke-width="2.5"/><path d="M0.2 8h10.6" stroke="#000" stroke-width="2.3"/><path d="M14.2 3.1 C 10.5 1.7, 6.8 2.3, 5.2 4.4 C 3.9 6.2, 3.9 9.8, 5.2 11.6 C 6.8 13.7, 10.5 14.3, 14.2 12.9" fill="none" stroke="#0b66a3" stroke-width="1.3"/><path d="M2.5 8h3.500" stroke="#0b66a3" stroke-width="1"/></svg>
<span class="t" style="left:638.00px;top:132.14px;font-size:12px;color:#000;transform:scaleX(0.9984);transform-origin:0 0;">Memory Viewer</span>
<svg style="left:1587px;top:133px" width="110" height="12" viewBox="0 0 110 12"><path d="M0 5.5h10" stroke="#000" stroke-width="1.2"/><rect x="45.5" y="0.5" width="9" height="9" fill="none" stroke="#000" stroke-width="1.2"/><path d="M91 0.5l10 10M101 0.5l-10 10" stroke="#000" stroke-width="1.2" fill="none"/></svg>
<span class="t" style="left:616.00px;top:157.14px;font-size:12px;color:#000;transform:scaleX(0.9310);transform-origin:0 0;">File</span>
<span class="t" style="left:648.00px;top:157.14px;font-size:12px;color:#000;transform:scaleX(0.9205);transform-origin:0 0;">Search</span>
<span class="t" style="left:697.00px;top:157.14px;font-size:12px;color:#000;transform:scaleX(0.9693);transform-origin:0 0;">View</span>
<span class="t" style="left:736.00px;top:157.14px;font-size:12px;color:#000;transform:scaleX(0.9898);transform-origin:0 0;">Debug</span>
<span class="t" style="left:785.00px;top:157.14px;font-size:12px;color:#000;transform:scaleX(0.9639);transform-origin:0 0;">Tools</span>
<span class="t" style="left:826.00px;top:157.14px;font-size:12px;color:#6d6d6d;transform:scaleX(0.9784);transform-origin:0 0;">Kernel tools</span>
<div class="r" style="left:610px;top:175px;width:1095px;height:1px;background:#fff;"></div>
<div class="r" style="left:611px;top:176px;width:1093px;height:20px;background:#f0f0f0;border:1px solid #8e8e8e;border-right:none;box-sizing:border-box;"></div>
<div class="r" style="left:1704px;top:175px;width:1px;height:21px;background:#8e8e8e;"></div>
<span class="t" style="left:1115.00px;top:178.74px;font-size:13px;color:#000;transform:scaleX(0.9262);transform-origin:0 0;">7FFD838A0000</span>
<div class="r" style="left:610px;top:196px;width:1078px;height:21px;background:#fff;"></div>
<div class="r" style="left:909px;top:196px;width:1px;height:21px;background:#e5e5e5;"></div>
<div class="r" style="left:1042px;top:196px;width:1px;height:21px;background:#e5e5e5;"></div>
<div class="r" style="left:1469px;top:196px;width:1px;height:21px;background:#e5e5e5;"></div>
<span class="t" style="left:613.00px;top:200.24px;font-size:13px;color:#000;transform:scaleX(1.0065);transform-origin:0 0;">Address</span>
<span class="t" style="left:912.70px;top:200.24px;font-size:13px;color:#000;transform:scaleX(0.9227);transform-origin:0 0;">Bytes</span>
<span class="t" style="left:1046.00px;top:200.24px;font-size:13px;color:#000;transform:scaleX(1.0213);transform-origin:0 0;">Opcode</span>
<span class="t" style="left:1473.00px;top:200.24px;font-size:13px;color:#000;transform:scaleX(0.9938);transform-origin:0 0;">Comment</span>
<div class="r" style="left:610px;top:274px;width:1078px;height:19px;background:#0078d7;box-shadow:inset 0 0 0 1px #222;outline:1px dotted #ff9326;outline-offset:-1px;"></div>
<span class="t" style="left:611.00px;top:219.24px;font-size:13px;color:#000;transform:scaleX(0.9262);transform-origin:0 0;">7FFD838A0000</span>
<span class="t" style="left:1044.00px;top:218.83px;font-size:13px;color:#000;transform:scaleX(0.7556);transform-origin:0 0;font-weight:bold;">??</span>
<span class="t" style="left:611.00px;top:238.24px;font-size:13px;color:#000;transform:scaleX(0.9262);transform-origin:0 0;">7FFD838A0001</span>
<span class="t" style="left:1044.00px;top:237.83px;font-size:13px;color:#000;transform:scaleX(0.7556);transform-origin:0 0;font-weight:bold;">??</span>
<span class="t" style="left:611.00px;top:257.24px;font-size:13px;color:#000;transform:scaleX(0.9262);transform-origin:0 0;">7FFD838A0002</span>
<span class="t" style="left:1044.00px;top:256.84px;font-size:13px;color:#000;transform:scaleX(0.7556);transform-origin:0 0;font-weight:bold;">??</span>
<span class="t" style="left:611.00px;top:276.24px;font-size:13px;color:#fff;transform:scaleX(0.9262);transform-origin:0 0;">7FFD838A0003</span>
<span class="t" style="left:1044.00px;top:275.84px;font-size:13px;color:#fff;transform:scaleX(0.7556);transform-origin:0 0;font-weight:bold;">??</span>
<span class="t" style="left:611.00px;top:295.24px;font-size:13px;color:#000;transform:scaleX(0.9262);transform-origin:0 0;">7FFD838A0004</span>
<span class="t" style="left:1044.00px;top:294.84px;font-size:13px;color:#000;transform:scaleX(0.7556);transform-origin:0 0;font-weight:bold;">??</span>
<span class="t" style="left:611.00px;top:314.24px;font-size:13px;color:#000;transform:scaleX(0.9262);transform-origin:0 0;">7FFD838A0005</span>
<span class="t" style="left:1044.00px;top:313.84px;font-size:13px;color:#000;transform:scaleX(0.7556);transform-origin:0 0;font-weight:bold;">??</span>
<span class="t" style="left:611.00px;top:333.24px;font-size:13px;color:#000;transform:scaleX(0.9262);transform-origin:0 0;">7FFD838A0006</span>
<span class="t" style="left:1044.00px;top:332.84px;font-size:13px;color:#000;transform:scaleX(0.7556);transform-origin:0 0;font-weight:bold;">??</span>
<span class="t" style="left:611.00px;top:352.24px;font-size:13px;color:#000;transform:scaleX(0.9262);transform-origin:0 0;">7FFD838A0007</span>
<span class="t" style="left:1044.00px;top:351.84px;font-size:13px;color:#000;transform:scaleX(0.7556);transform-origin:0 0;font-weight:bold;">??</span>
<span class="t" style="left:611.00px;top:371.24px;font-size:13px;color:#000;transform:scaleX(0.9262);transform-origin:0 0;">7FFD838A0008</span>
<span class="t" style="left:1044.00px;top:370.84px;font-size:13px;color:#000;transform:scaleX(0.7556);transform-origin:0 0;font-weight:bold;">??</span>
<span class="t" style="left:611.00px;top:390.24px;font-size:13px;color:#000;transform:scaleX(0.9262);transform-origin:0 0;">7FFD838A0009</span>
<span class="t" style="left:1044.00px;top:389.84px;font-size:13px;color:#000;transform:scaleX(0.7556);transform-origin:0 0;font-weight:bold;">??</span>
<span class="t" style="left:611.00px;top:409.24px;font-size:13px;color:#000;transform:scaleX(0.9118);transform-origin:0 0;">7FFD838A000A</span>
<span class="t" style="left:1044.00px;top:408.84px;font-size:13px;color:#000;transform:scaleX(0.7556);transform-origin:0 0;font-weight:bold;">??</span>
<span class="t" style="left:611.00px;top:428.24px;font-size:13px;color:#000;transform:scaleX(0.9118);transform-origin:0 0;">7FFD838A000B</span>
<span class="t" style="left:1044.00px;top:427.84px;font-size:13px;color:#000;transform:scaleX(0.7556);transform-origin:0 0;font-weight:bold;">??</span>
<span class="t" style="left:611.00px;top:447.24px;font-size:13px;color:#000;transform:scaleX(0.9049);transform-origin:0 0;">7FFD838A000C</span>
<span class="t" style="left:1044.00px;top:446.84px;font-size:13px;color:#000;transform:scaleX(0.7556);transform-origin:0 0;font-weight:bold;">??</span>
<div class="r" style="left:610px;top:464px;width:1078px;height:11px;overflow:hidden">
<span class="t" style="left:1px;top:2.23px;font-size:13px;letter-spacing:-0.56px">7FFD838A000D</span>
<span class="t" style="left:434px;top:2.23px;font-size:13px;font-weight:bold;letter-spacing:-1.3px">??</span>
</div>
<div class="r" style="left:610px;top:475px;width:1078px;height:17px;background:#f0f0f0;"></div>
<div class="r" style="left:627px;top:476px;width:355px;height:15px;background:#cdcdcd;"></div>
<div class="r" style="left:1688px;top:196px;width:17px;height:296px;background:#f0f0f0;border-left:1px solid #fff;box-sizing:border-box;"></div>
<div class="r" style="left:1689px;top:338px;width:15px;height:18px;background:#cdcdcd;"></div>
<svg style="left:618.5px;top:483.5px" width="1" height="1"><path d="M2 -3.3L-1.5 0L2 3.3" fill="none" stroke="#5a5a5a" stroke-width="2.1"/></svg>
<svg style="left:1680px;top:483.5px" width="1" height="1"><path d="M-2 -3.3L1.5 0L-2 3.3" fill="none" stroke="#5a5a5a" stroke-width="2.1"/></svg>
<svg style="left:1696px;top:484.5px" width="1" height="1"><path d="M-3.3 -2L0 1.5L3.3 -2" fill="none" stroke="#5a5a5a" stroke-width="2.1"/></svg>
<svg style="left:1696px;top:205px" width="1" height="1"><path d="M-3.3 2L0 -1.5L3.3 2" fill="none" stroke="#5a5a5a" stroke-width="2.1"/></svg>
<div class="r" style="left:610px;top:491px;width:1095px;height:2px;background:#a0a0a0;"></div>
<div class="r" style="left:610px;top:493px;width:1095px;height:19px;background:#fff;border-left:1px solid #696969;box-sizing:border-box;"></div>
<div class="r" style="left:610px;top:512px;width:1095px;height:2px;background:#dcdcdc;"></div>
<div class="r" style="left:609px;top:517px;width:1097px;height:2px;background:#696969;"></div>
<div class="r" style="left:1142px;top:514px;width:28px;height:2px;background:repeating-linear-gradient(90deg,#b0b0b0 0 2px,transparent 2px 4px)"></div>
<div class="r" style="left:1687px;top:519px;width:1px;height:396px;background:#fff;"></div>
<div class="r" style="left:1689px;top:713px;width:14px;height:17px;background:#cdcdcd;"></div>
<svg style="left:1695.5px;top:529px" width="1" height="1"><path d="M-3.3 2L0 -1.5L3.3 2" fill="none" stroke="#5a5a5a" stroke-width="2.1"/></svg>
<svg style="left:1695.5px;top:906px" width="1" height="1"><path d="M-3.3 -2L0 1.5L3.3 -2" fill="none" stroke="#5a5a5a" stroke-width="2.1"/></svg>
<div class="r" style="left:611px;top:552px;width:872px;height:1px;background:#000;"></div>
<div class="r" style="left:610px;top:519px;width:1078px;height:396px;overflow:hidden">
<pre class="m" style="left:1px;top:2px">Protect:No Access  AllocationBase=00000000 Base=7FF706240000 Size=6276D0000</pre>
<pre class="m" style="left:1px;top:18px">address      00 01 02 03 04 05 06 07 08 09 0A 0B 0C 0D 0E 0F 10 11 12 13 14 15 16 17 0123456789ABCDEF01234567</pre>
<pre class="m" style="left:1px;top:36px">7FF706240000 ?? ?? ?? ?? ?? ?? ?? ?? ?? ?? ?? ?? ?? ?? ?? ?? ?? ?? ?? ?? ?? ?? ?? ?? ????????????????????????</pre>
<pre class="m" style="left:1px;top:52px">7FF706240018 ?? ?? ?? ?? ?? ?? ?? ?? ?? ?? ?? ?? ?? ?? ?? ?? ?? ?? ?? ?? ?? ?? ?? ?? ????????????????????????</pre>
<pre class="m" style="left:1px;top:68px">7FF706240030 ?? ?? ?? ?? ?? ?? ?? ?? ?? ?? ?? ?? ?? ?? ?? ?? ?? ?? ?? ?? ?? ?? ?? ?? ????????????????????????</pre>
<pre class="m" style="left:1px;top:84px">7FF706240048 ?? ?? ?? ?? ?? ?? ?? ?? ?? ?? ?? ?? ?? ?? ?? ?? ?? ?? ?? ?? ?? ?? ?? ?? ????????????????????????</pre>
<pre class="m" style="left:1px;top:100px">7FF706240060 ?? ?? ?? ?? ?? ?? ?? ?? ?? ?? ?? ?? ?? ?? ?? ?? ?? ?? ?? ?? ?? ?? ?? ?? ????????????????????????</pre>
<pre class="m" style="left:1px;top:116px">7FF706240078 ?? ?? ?? ?? ?? ?? ?? ?? ?? ?? ?? ?? ?? ?? ?? ?? ?? ?? ?? ?? ?? ?? ?? ?? ????????????????????????</pre>
<pre class="m" style="left:1px;top:132px">7FF706240090 ?? ?? ?? ?? ?? ?? ?? ?? ?? ?? ?? ?? ?? ?? ?? ?? ?? ?? ?? ?? ?? ?? ?? ?? ????????????????????????</pre>
<pre class="m" style="left:1px;top:148px">7FF7062400A8 ?? ?? ?? ?? ?? ?? ?? ?? ?? ?? ?? ?? ?? ?? ?? ?? ?? ?? ?? ?? ?? ?? ?? ?? ????????????????????????</pre>
<pre class="m" style="left:1px;top:164px">7FF7062400C0 ?? ?? ?? ?? ?? ?? ?? ?? ?? ?? ?? ?? ?? ?? ?? ?? ?? ?? ?? ?? ?? ?? ?? ?? ????????????????????????</pre>
<pre class="m" style="left:1px;top:180px">7FF7062400D8 ?? ?? ?? ?? ?? ?? ?? ?? ?? ?? ?? ?? ?? ?? ?? ?? ?? ?? ?? ?? ?? ?? ?? ?? ????????????????????????</pre>
<pre class="m" style="left:1px;top:196px">7FF7062400F0 ?? ?? ?? ?? ?? ?? ?? ?? ?? ?? ?? ?? ?? ?? ?? ?? ?? ?? ?? ?? ?? ?? ?? ?? ????????????????????????</pre>
<pre class="m" style="left:1px;top:212px">7FF706240108 ?? ?? ?? ?? ?? ?? ?? ?? ?? ?? ?? ?? ?? ?? ?? ?? ?? ?? ?? ?? ?? ?? ?? ?? ????????????????????????</pre>
<pre class="m" style="left:1px;top:228px">7FF706240120 ?? ?? ?? ?? ?? ?? ?? ?? ?? ?? ?? ?? ?? ?? ?? ?? ?? ?? ?? ?? ?? ?? ?? ?? ????????????????????????</pre>
<pre class="m" style="left:1px;top:244px">7FF706240138 ?? ?? ?? ?? ?? ?? ?? ?? ?? ?? ?? ?? ?? ?? ?? ?? ?? ?? ?? ?? ?? ?? ?? ?? ????????????????????????</pre>
<pre class="m" style="left:1px;top:260px">7FF706240150 ?? ?? ?? ?? ?? ?? ?? ?? ?? ?? ?? ?? ?? ?? ?? ?? ?? ?? ?? ?? ?? ?? ?? ?? ????????????????????????</pre>
<pre class="m" style="left:1px;top:276px">7FF706240168 ?? ?? ?? ?? ?? ?? ?? ?? ?? ?? ?? ?? ?? ?? ?? ?? ?? ?? ?? ?? ?? ?? ?? ?? ????????????????????????</pre>
<pre class="m" style="left:1px;top:292px">7FF706240180 ?? ?? ?? ?? ?? ?? ?? ?? ?? ?? ?? ?? ?? ?? ?? ?? ?? ?? ?? ?? ?? ?? ?? ?? ????????????????????????</pre>
<pre class="m" style="left:1px;top:308px">7FF706240198 ?? ?? ?? ?? ?? ?? ?? ?? ?? ?? ?? ?? ?? ?? ?? ?? ?? ?? ?? ?? ?? ?? ?? ?? ????????????????????????</pre>
<pre class="m" style="left:1px;top:324px">7FF7062401B0 ?? ?? ?? ?? ?? ?? ?? ?? ?? ?? ?? ?? ?? ?? ?? ?? ?? ?? ?? ?? ?? ?? ?? ?? ????????????????????????</pre>
<pre class="m" style="left:1px;top:340px">7FF7062401C8 ?? ?? ?? ?? ?? ?? ?? ?? ?? ?? ?? ?? ?? ?? ?? ?? ?? ?? ?? ?? ?? ?? ?? ?? ????????????????????????</pre>
<pre class="m" style="left:1px;top:356px">7FF7062401E0 ?? ?? ?? ?? ?? ?? ?? ?? ?? ?? ?? ?? ?? ?? ?? ?? ?? ?? ?? ?? ?? ?? ?? ?? ????????????????????????</pre>
<pre class="m" style="left:1px;top:372px">7FF7062401F8 ?? ?? ?? ?? ?? ?? ?? ?? ?? ?? ?? ?? ?? ?? ?? ?? ?? ?? ?? ?? ?? ?? ?? ?? ????????????????????????</pre>
<pre class="m" style="left:1px;top:388px">7FF706240210 ?? ?? ?? ?? ?? ?? ?? ?? ?? ?? ?? ?? ?? ?? ?? ?? ?? ?? ?? ?? ?? ?? ?? ?? ????????????????????????</pre>
</div>
<div class="r" style="left:902.85px;top:537px;width:1.3px;height:378px;background:#f7f40c;"></div>
<div class="r" style="left:1094.85px;top:537px;width:1.3px;height:378px;background:#f7f40c;"></div>
<div class="r" style="left:1354.85px;top:537px;width:1.3px;height:378px;background:#f7f40c;"></div>
<div class="r" style="left:1418.85px;top:537px;width:1.3px;height:378px;background:#f7f40c;"></div>
<div class="r" style="left:609px;top:915px;width:1097px;height:1px;background:#fff;"></div>
<div class="r" style="left:609px;top:933px;width:1097px;height:1px;background:#fff;"></div>
</body></html>
